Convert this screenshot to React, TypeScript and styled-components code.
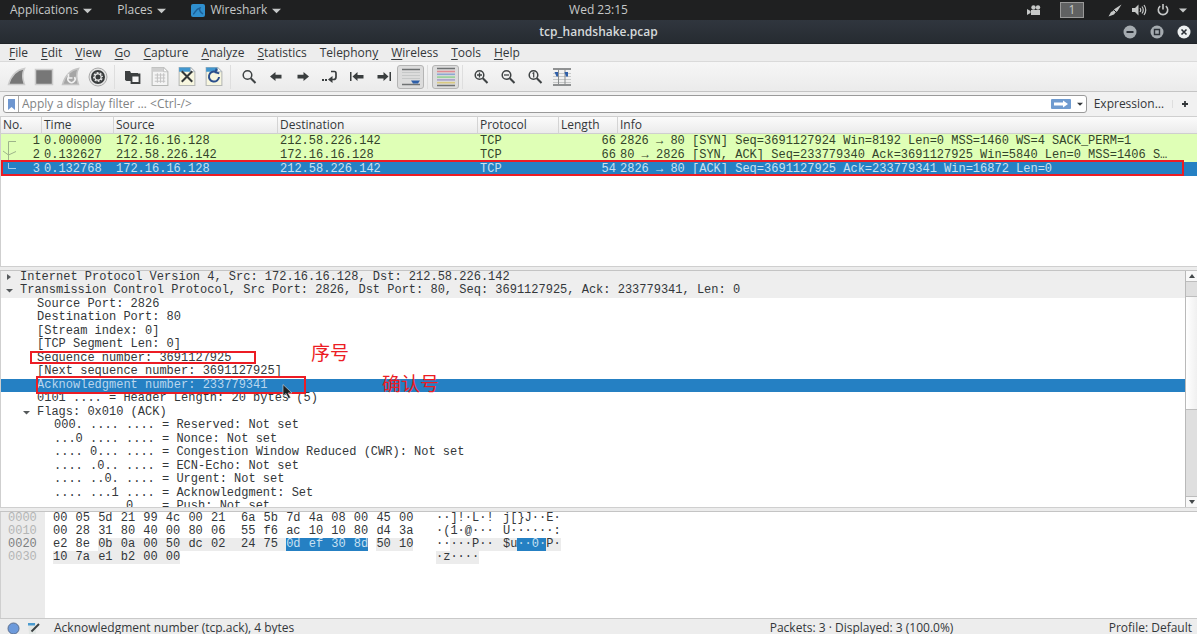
import React from "react";
import styled, { createGlobalStyle, css } from "styled-components";

const UI = '"Open Sans", "Noto Sans", sans-serif';
const MONO = '"Liberation Mono", monospace';
const BLUE = "#2580c3";
const RED = "#ec1c24";

const Global = createGlobalStyle`
  *, *::before, *::after { box-sizing: border-box; }
  body { margin: 0; background: #ededed; color: #33373a; font: 12px/16px ${UI}; }
  button { margin: 0; padding: 0; border: 0; background: none; color: inherit; font: inherit; }
  svg { display: block; flex: none; }
`;

const Screen = styled.div`
  display: flex;
  flex-direction: column;
  height: 100vh;
  overflow: hidden;
`;

/* ---------- desktop bar and title bar ---------- */

const DesktopBar = styled.header`
  flex: none;
  display: grid;
  grid-template-columns: 1fr auto 1fr;
  align-items: center;
  height: 20px;
  padding: 0 10px;
  background: #1f2021;
  color: #c6c8c8;
  font-weight: 500;
`;

const DesktopMenus = styled.nav`
  display: flex;
  gap: 25px;
`;

const DesktopMenu = styled.button`
  display: flex;
  align-items: center;
  gap: 5px;
`;

const Tray = styled.div`
  display: flex;
  align-items: center;
  justify-content: flex-end;
  gap: 10px;
`;

const Workspace = styled.button`
  width: 24px;
  height: 16px;
  margin: 0 14px 0 9px;
  border: 1px solid #999;
  background: #606162;
  line-height: 14px;
`;

const TitleBar = styled.div`
  flex: none;
  display: grid;
  grid-template-columns: 1fr auto 1fr;
  align-items: center;
  height: 24px;
  padding: 0 6px;
  background: linear-gradient(#30363e, #262b31);
  border-bottom: 1px solid #1f2327;
  color: #d5d9da;
`;

const Title = styled.h1`
  grid-column: 2;
  margin: 0;
  font-size: 12px;
  line-height: 16px;
  font-weight: 600;
`;

const WindowButtons = styled.div`
  display: flex;
  justify-content: flex-end;
  gap: 13px;
`;

/* ---------- menu, tool bar and filter ---------- */

const MenuBar = styled.nav`
  flex: none;
  display: flex;
  gap: 13px;
  height: 18px;
  padding: 0 9px;
  align-items: center;
  background: #ededed;
  border-bottom: 1px solid #dadada;
`;

const MenuItem = styled.button`
  text-decoration: none;
  u { text-underline-offset: 2px; }
`;

const ToolBar = styled.div`
  flex: none;
  display: flex;
  align-items: center;
  height: 30px;
  padding-left: 3px;
  background: linear-gradient(#f6f6f6, #ebebeb);
  border-bottom: 1px solid #c4c4c4;
`;

const ToolGroup = styled.div`
  display: flex;
  & + & {
    margin-left: 3px;
    padding-left: 4px;
    border-left: 1px solid #dedede;
  }
`;

const Tool = styled.button<{ $on?: boolean }>`
  display: flex;
  align-items: center;
  justify-content: center;
  width: 27px;
  height: 24px;
  border-radius: 3px;
  ${(p) => p.$on && css`border: 1px solid #b4b4b4; background: #dcdcdc;`}
`;

const FilterBar = styled.div`
  flex: none;
  display: flex;
  align-items: center;
  height: 24px;
  padding: 0 8px 0 3px;
  background: #f1f1f1;
`;

const FilterBox = styled.label`
  flex: 1;
  display: flex;
  align-items: center;
  height: 18px;
  padding-right: 3px;
  border: 1px solid #9a9a9a;
  border-radius: 3px;
  background: #fff;
`;

const Bookmark = styled.button`
  display: flex;
  align-items: center;
  justify-content: center;
  width: 15px;
  height: 16px;
  border-right: 1px solid #a8a8a8;
`;

const FilterInput = styled.input`
  flex: 1;
  min-width: 0;
  padding: 0 3px;
  border: 0;
  outline: 0;
  background: none;
  font: 12px/16px ${UI};
  &::placeholder { color: #7f8384; opacity: 1; }
`;

const ApplyButton = styled.button`
  display: flex;
  align-items: center;
  justify-content: center;
  width: 20px;
  height: 10px;
  margin-right: 6px;
  border-radius: 1px;
  background: #6f9bd0;
`;

const Expression = styled.button`
  margin: 0 8px 0 7px;
`;

const AddButton = styled.button`
  padding-left: 8px;
  border-left: 1px solid #dedede;
`;

/* ---------- panes ---------- */

const Splitter = styled.div`
  flex: none;
  height: 5px;
  border-top: 1px solid #cfcfcf;
  border-bottom: 1px solid #c4c4c4;
  background: #ececec;
`;

const Pane = styled.section<{ $grow: number }>`
  position: relative;
  flex: ${(p) => p.$grow} 1 0;
  min-height: 0;
  display: flex;
  overflow: hidden;
  border-left: 1px solid #cfcfcf;
  background: #fff;
`;

const Packets = styled.table`
  width: 100%;
  align-self: flex-start;
  border-spacing: 0;
  table-layout: fixed;
  font: 12px/14px ${MONO};
  th {
    height: 18px;
    padding: 0 2px;
    border-top: 1px solid #cfcfcf;
    border-right: 1px solid #d4d4d4;
    border-bottom: 1px solid #cfcfcf;
    background: linear-gradient(#fbfbfb, #ebebeb);
    font: 12px/16px ${UI};
    text-align: left;
  }
  th:last-child { border-right: 0; }
  td {
    height: 14px;
    padding: 0 2px;
    white-space: nowrap;
    overflow: hidden;
  }
`;

const PacketRow = styled.tr<{ $selected?: boolean }>`
  background: ${(p) => (p.$selected ? BLUE : "#dfffb6")};
  color: ${(p) => (p.$selected ? "#c9e0f2" : "#33432b")};
`;

const NumberCell = styled.td`
  text-align: right;
`;

const Conversation = styled.svg`
  position: absolute;
  left: 1px;
  top: 21px;
`;

const Frame = styled.div`
  position: absolute;
  z-index: 1;
  border: 2px solid ${RED};
`;

const PacketFrame = styled(Frame)`
  left: 0;
  right: 13px;
  top: 44px;
  height: 16px;
`;

const Tree = styled.div`
  flex: 1;
  min-width: 0;
  align-self: flex-start;
  display: grid;
  grid-auto-rows: 1fr;
  min-height: 243px;
  font: 12px/13px ${MONO};
  color: #33373a;
`;

const Node = styled.div<{ $level: number; $tone?: "section" | "selected" }>`
  position: relative;
  display: flex;
  align-items: center;
  padding-left: ${(p) => 3 + p.$level * 17}px;
  white-space: pre;
  ${(p) => p.$tone === "section" && css`background: #eeeeee;`}
  ${(p) => p.$tone === "selected" && css`background: ${BLUE}; color: #b9d6ee;`}
`;

const Toggle = styled.span`
  display: flex;
  align-items: center;
  justify-content: center;
  width: 10px;
  height: 10px;
  margin-right: 6px;
`;

const SequenceFrame = styled(Frame)`
  left: 29px;
  top: -1px;
  width: 226px;
  height: 13px;
`;

const AckFrame = styled(Frame)`
  left: 35px;
  top: -3px;
  width: 270px;
  height: 18px;
`;

const Note = styled.span<{ $left: number; $top: number }>`
  position: absolute;
  z-index: 1;
  left: ${(p) => p.$left}px;
  top: ${(p) => p.$top}px;
  color: ${RED};
  font: 19px/24px "Noto Sans CJK SC", sans-serif;
`;

const Pointer = styled.svg`
  position: absolute;
  z-index: 2;
  left: 281px;
  top: 5px;
`;

const ScrollBar = styled.div`
  flex: none;
  display: flex;
  flex-direction: column;
  width: 12px;
  border-left: 1px solid #b9b9b9;
  background: #dfdfdf;
`;

const ScrollButton = styled.button`
  display: flex;
  align-items: center;
  justify-content: center;
  height: 10px;
  background: #f8f8f8;
`;

const ScrollTrack = styled.div`
  flex: 1;
  padding-top: 14px;
  border-top: 1px solid #bdbdbd;
  border-bottom: 1px solid #bdbdbd;
`;

const ScrollThumb = styled.div`
  height: 57%;
  border-top: 1px solid #bdbdbd;
  border-bottom: 1px solid #bdbdbd;
  background: linear-gradient(90deg, #fff, #f0f0f0);
`;

const Offsets = styled.div`
  width: 44px;
  padding-left: 7px;
  background: #ebebeb;
  color: #b3b5b5;
  font: 12px/13px ${MONO};
`;

const Offset = styled.div<{ $active?: boolean }>`
  color: ${(p) => (p.$active ? "#7d8081" : "inherit")};
`;

const HexRows = styled.div`
  padding-left: 8px;
  font: 12px/13px ${MONO};
`;

const HexRow = styled.div`
  display: flex;
`;

const ByteGroup = styled.div`
  display: grid;
  grid-template-columns: repeat(7, 1fr) 30px;
  width: 188px;
`;

type Mark = "field" | "layer" | undefined;

const marked = css<{ $mark?: Mark }>`
  ${(p) => p.$mark === "field" && css`background: ${BLUE}; color: #c9e0f2;`}
  ${(p) => p.$mark === "layer" && css`background: #ececec;`}
`;

const Byte = styled.span<{ $mark?: Mark; $last?: boolean }>`
  justify-self: ${(p) => (p.$last ? "start" : "stretch")};
  ${marked}
`;

const Ascii = styled.div`
  display: flex;
  margin-left: 7px;
`;

const AsciiGroup = styled.div`
  display: flex;
  width: 67px;
  white-space: pre;
  &:not(:last-child) > :last-child { flex: 1; }
`;

const Chars = styled.span<{ $mark?: Mark }>`
  ${marked}
`;

const StatusBar = styled.footer`
  flex: none;
  display: flex;
  align-items: center;
  height: 16px;
  padding: 3px 5px 0 7px;
  border-top: 1px solid #c9c9c9;
  background: #ededed;
  white-space: nowrap;
`;

const StatusButton = styled.button`
  margin-right: 7px;
`;

const StatusField = styled.div`
  flex: 1;
  padding-left: 7px;
`;

const StatusCounts = styled.div`
  width: 339px;
`;

/* ---------- drawings ---------- */

const Caret = ({ size = 9, color = "currentColor" }: { size?: number; color?: string }) => (
  <svg width={size} height={size} viewBox="0 0 10 10">
    <path d="M0 3h10L5 8z" fill={color} />
  </svg>
);

const Fin = () => (
  <svg width="20" height="20" viewBox="0 0 20 20">
    <path d="M1.500 17.500C4 9 9 3 17.500 1.500C14.500 7 15.500 12 17.500 17.500Z" fill="#777" stroke="#ccc" strokeWidth="1.500" />
  </svg>
);

const Stop = () => (
  <svg width="20" height="20" viewBox="0 0 20 20">
    <path d="M1.500 2.500h17v15h-17z" fill="#777" stroke="#ccc" strokeWidth="1.500" />
  </svg>
);

const Restart = () => (
  <svg width="20" height="20" viewBox="0 0 20 20">
    <path d="M1.500 17.500C4 9 9 3 17.500 1.500C14.500 7 15.500 12 17.500 17.500Z" fill="#a5a5a5" stroke="#c4c4c4" strokeWidth="1.500" />
    <path d="M7.500 10a3.600 3.600 0 1 0 6 0M7.500 7v4h4" fill="none" stroke="#f0f0f0" strokeWidth="1.600" />
  </svg>
);

const Options = () => (
  <svg width="20" height="20" viewBox="0 0 20 20">
    <circle cx="10" cy="10" r="9" fill="#e4e4e4" stroke="#aaa" />
    <circle cx="10" cy="10" r="6" fill="none" stroke="#383b3c" strokeWidth="2" />
    <circle cx="10" cy="10" r="4.400" fill="none" stroke="#383b3c" strokeWidth="1.200" strokeDasharray="1.700 1.755" />
    <circle cx="10" cy="10" r="2.500" fill="#383b3c" />
  </svg>
);

const Folder = () => (
  <svg width="18" height="18" viewBox="0 0 18 18">
    <path d="M1 3h5l1 2h7v2H7v6H2.500L1 12z" fill="#3d4041" />
    <path d="M7.500 6.500h8v8.500h-8z" fill="#f5f5f5" stroke="#3d4041" strokeWidth="1.800" />
    <path d="M7 6.500h8.500v2H7z" fill="#3d4041" />
  </svg>
);

const Sheet = ({ kind }: { kind: "data" | "close" | "reload" }) => (
  <svg width="20" height="21" viewBox="0 0 18 20">
    <path d="M1.500 1.500h11l4 4v13h-15z" fill={kind === "data" ? "#f4f4f4" : "#f7f6df"} stroke="#b5b7b5" />
    <path d="M1.500 1.500h11l4 4h-15z" fill={kind === "data" ? "#cfcfcf" : "#4297cf"} />
    <path d="M12.500 1.500l4 4h-4z" fill="#fff" stroke="#b5b7b5" strokeWidth="0.700" />
    {kind === "data" && <path d="M4 8.500h10M4 11.500h10M4 14.500h10M6.500 7v9M9.500 7v9M12.500 7v9" stroke="#c4c4c4" />}
    {kind === "close" && <path d="M4 5l10 10M14 5L4 15" stroke="#333839" strokeWidth="2" />}
    {kind === "reload" && <path d="M13.800 10.500a4.800 4.800 0 1 1-3.300-5M11.500 2.500L10.500 6l3.500 1" fill="none" stroke="#2b4f8c" strokeWidth="1.900" />}
  </svg>
);

const Lens = ({ mark = "" }: { mark?: "" | "plus" | "minus" | "one" }) => (
  <svg width="16" height="16" viewBox="0 0 16 16" fill="none" stroke="#3f4344">
    <circle cx="6.500" cy="6" r="4.300" strokeWidth="1.500" />
    <path d="M9.800 9.300L14.500 14" strokeWidth="2" />
    {mark === "plus" && <path d="M4 6h5M6.500 3.500v5" strokeWidth="1.300" />}
    {mark === "minus" && <path d="M4 6h5" strokeWidth="1.300" />}
    {mark === "one" && <path d="M5.500 4.500l1.200-.700v4.800" strokeWidth="1.200" />}
  </svg>
);

const Arrow = ({ kind }: { kind: "back" | "forward" | "first" | "last" }) => {
  const left = kind === "back" || kind === "first";
  const bar = kind === "first" || kind === "last";
  return (
    <svg width="16" height="14" viewBox="0 0 16 14" fill="#3a3e3f">
      <g transform={left ? undefined : "matrix(-1 0 0 1 16 0)"}>
        <path d={bar ? "M3.500 6.500L8.500 2v3h6v3.500h-6v2.500z" : "M2 6.500L7.500 2v2.700h6v3.800h-6V11z"} />
        {bar && <path d="M1 2h1.500v9H1z" />}
      </g>
    </svg>
  );
};

const GoTo = () => (
  <svg width="16" height="14" viewBox="0 0 16 14">
    <path d="M9 1.500h3.500c1.500 0 1.500 1 1.500 2v3.500c0 1.500-.700 2.500-2.500 2.500H9.500" fill="none" stroke="#3a3e3f" strokeWidth="1.700" />
    <path d="M6 9.500l4.500-3.500v7zM0 9h2v2H0zM3 9h2v2H3z" fill="#3a3e3f" />
  </svg>
);

const AutoScroll = () => (
  <svg width="20" height="20" viewBox="0 0 20 20">
    <path d="M1 2.500h18M1 17.500h18" stroke="#6f7273" strokeWidth="1.500" />
    <path d="M1 5.500h18M1 8.500h18M1 11.500h18" stroke="#c6c8c8" />
    <path d="M10 13.500h9l-2 3h-5z" fill="#2f5fa8" />
  </svg>
);

const Colorize = () => (
  <svg width="20" height="20" viewBox="0 0 20 20" strokeWidth="1.600">
    <path d="M1 1.500h18M1 18.500h18" stroke="#6f7273" />
    <path d="M1 4.500h18" stroke="#e08c92" />
    <path d="M1 7.300h18" stroke="#8fa6d2" />
    <path d="M1 10.100h18" stroke="#94d195" />
    <path d="M1 12.900h18" stroke="#a79fcb" />
    <path d="M1 15.700h18" stroke="#d9c982" />
  </svg>
);

const Columns = () => (
  <svg width="20" height="20" viewBox="0 0 20 20">
    <path d="M1 2h18M1 18h18" stroke="#6f7273" strokeWidth="1.500" />
    <path d="M1 6.500h18M1 9.500h18M1 12.500h18M1 15.500h18" stroke="#c6c8c8" />
    <path d="M6.500 2v16M13 2v16" stroke="#8b8e8f" />
    <path d="M2.500 5H6v4.500H4.500zM12.500 5H16v4.500h-2z" fill="#2f5fa8" />
  </svg>
);

const AppLogo = () => (
  <svg width="14" height="13" viewBox="0 0 14 13">
    <rect width="14" height="13" rx="2" fill="#2f8fce" />
    <path d="M2 10c2 0 2-5 7-6-1 2 0 4 3 6" fill="none" stroke="#1c5f97" strokeWidth="1.400" />
  </svg>
);

const Camera = () => (
  <svg width="14" height="11" viewBox="0 0 14 11" fill="#c6c8c8">
    <circle cx="6.500" cy="2.500" r="2.200" />
    <circle cx="11" cy="2.500" r="2.200" />
    <path d="M4 5h9v5H4zM0 4l3.500 2v2L0 10z" />
  </svg>
);

const Pen = () => (
  <svg width="14" height="13" viewBox="0 0 14 13">
    <path d="M.500 12.500L3 8l2-1 1.500-2L13.500.500 9.500 7 7.500 8.500 6 10.500z" fill="#c6c8c8" />
    <path d="M5.500 5.500l3 3" stroke="#1f2021" />
  </svg>
);

const Speaker = () => (
  <svg width="15" height="12" viewBox="0 0 15 12">
    <path d="M0 4h3l3.500-3.500v11L3 8H0z" fill="#c6c8c8" />
    <path d="M8 4q1.500 2 0 4M10 2.500q2.500 3.500 0 7M12 1q3.500 5 0 10" fill="none" stroke="#c6c8c8" strokeWidth="1.200" />
  </svg>
);

const Power = () => (
  <svg width="12" height="12" viewBox="0 0 12 12" fill="none" stroke="#c6c8c8" strokeWidth="1.600">
    <path d="M3.200 2.200a4.700 4.700 0 1 0 5.600 0M6 0v5.500" />
  </svg>
);

const WindowGlyph = ({ kind }: { kind: "min" | "max" | "close" }) => (
  <svg width="14" height="14" viewBox="0 0 14 14">
    <circle cx="7" cy="7" r="6.500" fill={kind === "close" ? "#edf0f1" : "#a5abb0"} />
    {kind === "min" && <path d="M3.500 7h7" stroke="#2b3037" strokeWidth="2" />}
    {kind === "max" && <path d="M4.500 4.500h5v5h-5z" fill="none" stroke="#2b3037" strokeWidth="1.400" />}
    {kind === "close" && <path d="M4.500 4.500l5 5M9.500 4.500l-5 5" stroke="#2b3037" strokeWidth="1.600" />}
  </svg>
);

/* ---------- data ---------- */

const menus: [string, string, string][] = [
  ["", "F", "ile"], ["", "E", "dit"], ["", "V", "iew"], ["", "G", "o"], ["", "C", "apture"],
  ["", "A", "nalyze"], ["", "S", "tatistics"], ["Telephon", "y", ""], ["", "W", "ireless"],
  ["", "T", "ools"], ["", "H", "elp"],
];

type ToolSpec = { label: string; icon: React.ReactNode; on?: boolean };

const tools: ToolSpec[][] = [
  [
    { label: "Start capture", icon: <Fin /> },
    { label: "Stop capture", icon: <Stop /> },
    { label: "Restart capture", icon: <Restart /> },
    { label: "Capture options", icon: <Options /> },
  ],
  [
    { label: "Open", icon: <Folder /> },
    { label: "Save", icon: <Sheet kind="data" /> },
    { label: "Close", icon: <Sheet kind="close" /> },
    { label: "Reload", icon: <Sheet kind="reload" /> },
  ],
  [
    { label: "Find packet", icon: <Lens /> },
    { label: "Previous packet", icon: <Arrow kind="back" /> },
    { label: "Next packet", icon: <Arrow kind="forward" /> },
    { label: "Go to packet", icon: <GoTo /> },
    { label: "First packet", icon: <Arrow kind="first" /> },
    { label: "Last packet", icon: <Arrow kind="last" /> },
    { label: "Auto scroll", icon: <AutoScroll />, on: true },
  ],
  [{ label: "Colorize", icon: <Colorize />, on: true }],
  [
    { label: "Zoom in", icon: <Lens mark="plus" /> },
    { label: "Zoom out", icon: <Lens mark="minus" /> },
    { label: "Normal size", icon: <Lens mark="one" /> },
    { label: "Resize columns", icon: <Columns /> },
  ],
];

const packets = [
  ["1", "0.000000", "172.16.16.128", "212.58.226.142", "TCP", "66", "2826 → 80 [SYN] Seq=3691127924 Win=8192 Len=0 MSS=1460 WS=4 SACK_PERM=1"],
  ["2", "0.132627", "212.58.226.142", "172.16.16.128", "TCP", "66", "80 → 2826 [SYN, ACK] Seq=233779340 Ack=3691127925 Win=5840 Len=0 MSS=1406 S…"],
  ["3", "0.132768", "172.16.16.128", "212.58.226.142", "TCP", "54", "2826 → 80 [ACK] Seq=3691127925 Ack=233779341 Win=16872 Len=0"],
];

type NodeSpec = {
  level: number;
  text: string;
  toggle?: "open" | "closed";
  tone?: "section" | "selected";
  extra?: React.ReactNode;
};

const nodes: NodeSpec[] = [
  { level: 0, toggle: "closed", tone: "section", text: "Internet Protocol Version 4, Src: 172.16.16.128, Dst: 212.58.226.142" },
  { level: 0, toggle: "open", tone: "section", text: "Transmission Control Protocol, Src Port: 2826, Dst Port: 80, Seq: 3691127925, Ack: 233779341, Len: 0" },
  { level: 1, text: "Source Port: 2826" },
  { level: 1, text: "Destination Port: 80" },
  { level: 1, text: "[Stream index: 0]" },
  { level: 1, text: "[TCP Segment Len: 0]" },
  { level: 1, text: "Sequence number: 3691127925", extra: <><SequenceFrame /><Note $left={310} $top={-12}>序号</Note></> },
  { level: 1, text: "[Next sequence number: 3691127925]" },
  {
    level: 1, tone: "selected", text: "Acknowledgment number: 233779341",
    extra: (
      <>
        <AckFrame />
        <Note $left={381} $top={-8}>确认号</Note>
        <Pointer width="13" height="16" viewBox="0 0 13 16">
          <path d="M1 0.500v11.500l3-2.500 2.500 5 2-1-2.500-4.500H10z" fill="#1b1f22" stroke="#d8dcdf" strokeWidth="0.600" />
        </Pointer>
      </>
    ),
  },
  { level: 1, text: "0101 .... = Header Length: 20 bytes (5)" },
  { level: 1, toggle: "open", text: "Flags: 0x010 (ACK)" },
  { level: 2, text: "000. .... .... = Reserved: Not set" },
  { level: 2, text: "...0 .... .... = Nonce: Not set" },
  { level: 2, text: ".... 0... .... = Congestion Window Reduced (CWR): Not set" },
  { level: 2, text: ".... .0.. .... = ECN-Echo: Not set" },
  { level: 2, text: ".... ..0. .... = Urgent: Not set" },
  { level: 2, text: ".... ...1 .... = Acknowledgment: Set" },
  { level: 2, text: ".... .... 0... = Push: Not set" },
];

const dump = [
  "00 05 5d 21 99 4c 00 21 6a 5b 7d 4a 08 00 45 00",
  "00 28 31 80 40 00 80 06 55 f6 ac 10 10 80 d4 3a",
  "e2 8e 0b 0a 00 50 dc 02 24 75 0d ef 30 8d 50 10",
  "10 7a e1 b2 00 00",
].map((line) => line.split(" "));

type Run = { text: string; mark?: Mark };

const ascii: Run[][][] = [
  [[{ text: "··]!·L·!" }], [{ text: "j[}J··E·" }]],
  [[{ text: "·(1·@···" }], [{ text: "U······:" }]],
  [
    [{ text: "··" }, { text: "···P··", mark: "layer" }],
    [{ text: "$u", mark: "layer" }, { text: "··0·", mark: "field" }, { text: "P·", mark: "layer" }],
  ],
  [[{ text: "·z····", mark: "layer" }]],
];

const LAYER_START = 34;
const FIELD_START = 42;
const FIELD_END = 45;

const markOf = (index: number): Mark =>
  index >= FIELD_START && index <= FIELD_END ? "field" : index >= LAYER_START ? "layer" : undefined;

const endsRun = (index: number, total: number) => index === FIELD_END || index % 16 === 15 || index === total - 1;

export default function App() {
  return (
    <Screen>
      <Global />
      <DesktopBar>
        <DesktopMenus>
          <DesktopMenu>Applications <Caret /></DesktopMenu>
          <DesktopMenu>Places <Caret /></DesktopMenu>
          <DesktopMenu><AppLogo />Wireshark <Caret /></DesktopMenu>
        </DesktopMenus>
        <time>Wed 23:15</time>
        <Tray>
          <Camera />
          <Workspace>1</Workspace>
          <Pen />
          <Speaker />
          <Power />
          <Caret size={8} />
        </Tray>
      </DesktopBar>

      <TitleBar>
        <Title>tcp_handshake.pcap</Title>
        <WindowButtons>
          <button aria-label="Minimize"><WindowGlyph kind="min" /></button>
          <button aria-label="Maximize"><WindowGlyph kind="max" /></button>
          <button aria-label="Close"><WindowGlyph kind="close" /></button>
        </WindowButtons>
      </TitleBar>

      <MenuBar>
        {menus.map(([before, key, after]) => (
          <MenuItem key={before + key + after}>{before}<u>{key}</u>{after}</MenuItem>
        ))}
      </MenuBar>

      <ToolBar>
        {tools.map((group, i) => (
          <ToolGroup key={i}>
            {group.map((t) => (
              <Tool key={t.label} aria-label={t.label} $on={t.on}>{t.icon}</Tool>
            ))}
          </ToolGroup>
        ))}
      </ToolBar>

      <FilterBar>
        <FilterBox>
          <Bookmark aria-label="Bookmarks">
            <svg width="7" height="11" viewBox="0 0 7 11"><path d="M0 0h7v11L3.500 8 0 11z" fill="#6f97d0" /></svg>
          </Bookmark>
          <FilterInput aria-label="Display filter" placeholder="Apply a display filter … <Ctrl-/>" />
          <ApplyButton aria-label="Apply filter">
            <svg width="14" height="8" viewBox="0 0 14 8"><path d="M0 2.500h9V.500L14 4 9 7.500v-2H0z" fill="#fff" /></svg>
          </ApplyButton>
          <button aria-label="Recent filters"><Caret size={6} /></button>
        </FilterBox>
        <Expression>Expression…</Expression>
        <AddButton aria-label="Add filter">
          <svg width="8" height="8" viewBox="0 0 8 8"><path d="M1 4h6M4 1v6" stroke="#33373a" strokeWidth="1.800" /></svg>
        </AddButton>
      </FilterBar>

      <Pane $grow={150}>
        <Packets>
          <colgroup>
            <col width="41" /><col width="72" /><col width="164" /><col width="200" /><col width="81" /><col width="59" /><col />
          </colgroup>
          <thead>
            <tr>{["No.", "Time", "Source", "Destination", "Protocol", "Length", "Info"].map((h) => <th key={h}>{h}</th>)}</tr>
          </thead>
          <tbody>
            {packets.map(([no, time, source, dest, protocol, length, info]) => (
              <PacketRow key={no} $selected={no === "3"}>
                <NumberCell>{no}</NumberCell>
                <td>{time}</td>
                <td>{source}</td>
                <td>{dest}</td>
                <td>{protocol}</td>
                <NumberCell>{length}</NumberCell>
                <td>{info}</td>
              </PacketRow>
            ))}
          </tbody>
        </Packets>
        <Conversation width="15" height="36" viewBox="0 0 15 36" fill="none">
          <path d="M14 4.500H6.500V25M1 14l5.500 4L14 14.500" stroke="#9db48a" />
          <path d="M6.500 26v5.500H14" stroke="#a9cde8" />
        </Conversation>
        <PacketFrame />
      </Pane>

      <Splitter />

      <Pane $grow={237}>
        <Tree role="tree">
          {nodes.map((n) => (
            <Node key={n.text} role="treeitem" $level={n.level} $tone={n.tone}>
              <Toggle>
                {n.toggle === "open" && <Caret size={7} color="#55595b" />}
                {n.toggle === "closed" && (
                  <svg width="6" height="6" viewBox="0 0 6 6"><path d="M1 0l4 3-4 3z" fill="#55595b" /></svg>
                )}
              </Toggle>
              <span>{n.text}</span>
              {n.extra}
            </Node>
          ))}
        </Tree>
        <ScrollBar>
          <ScrollButton aria-label="Scroll up">
            <svg width="6" height="4" viewBox="0 0 6 4"><path d="M0 4l3-4 3 4z" fill="#44484a" /></svg>
          </ScrollButton>
          <ScrollTrack><ScrollThumb /></ScrollTrack>
          <ScrollButton aria-label="Scroll down">
            <svg width="6" height="4" viewBox="0 0 6 4"><path d="M0 0l3 4 3-4z" fill="#44484a" /></svg>
          </ScrollButton>
        </ScrollBar>
      </Pane>

      <Splitter />

      <Pane $grow={106}>
        <Offsets>
          {["0000", "0010", "0020", "0030"].map((o) => <Offset key={o} $active={o === "0020"}>{o}</Offset>)}
        </Offsets>
        <HexRows>
          {dump.map((bytes, row) => (
            <HexRow key={row}>
              {[0, 8].map((start) => (
                <ByteGroup key={start}>
                  {bytes.slice(start, start + 8).map((b, i) => {
                    const index = row * 16 + start + i;
                    return <Byte key={i} $mark={markOf(index)} $last={endsRun(index, 54)}>{b}</Byte>;
                  })}
                </ByteGroup>
              ))}
              <Ascii>
                {ascii[row].map((group, g) => (
                  <AsciiGroup key={g}>
                    {group.map(({ text, mark }, i) => <Chars key={i} $mark={mark}>{text}</Chars>)}
                  </AsciiGroup>
                ))}
              </Ascii>
            </HexRow>
          ))}
        </HexRows>
      </Pane>

      <StatusBar>
        <StatusButton aria-label="Expert information">
          <svg width="13" height="13" viewBox="0 0 13 13"><circle cx="6.500" cy="6.500" r="5.500" fill="#6d9adb" stroke="#5b6f8f" /></svg>
        </StatusButton>
        <StatusButton aria-label="Capture comment">
          <svg width="13" height="13" viewBox="0 0 13 13">
            <path d="M1 1h8v11H2z" fill="#e2e6e4" />
            <path d="M1 1h7v2.500H1z" fill="#4a9bd0" />
            <path d="M4.500 9.500L12 2" stroke="#3b4042" strokeWidth="2" />
          </svg>
        </StatusButton>
        <StatusField>Acknowledgment number (tcp.ack), 4 bytes</StatusField>
        <StatusCounts>Packets: 3 · Displayed: 3 (100.0%)</StatusCounts>
        <div>Profile: Default</div>
      </StatusBar>
    </Screen>
  );
}
